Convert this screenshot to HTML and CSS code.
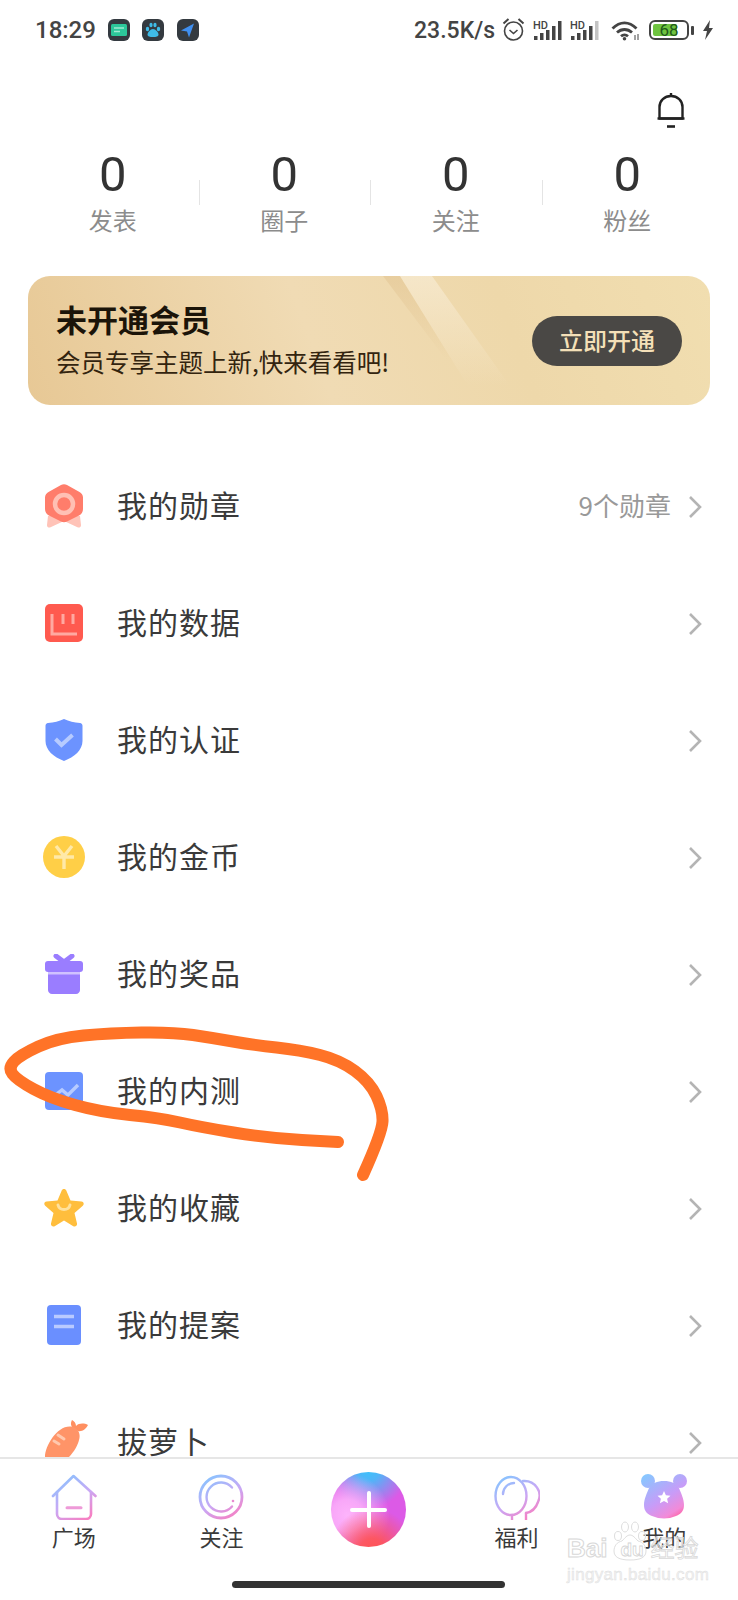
FILE: index.html
```html
<!DOCTYPE html>
<html lang="zh">
<head>
  <meta charset="UTF-8" />
  <meta name="viewport" content="width=device-width, initial-scale=1" />
  <title>我的</title>
  <link rel="stylesheet" href="styles.css">
</head>
<body>
  <div id="phone">
    <div class="status-bar">
      <span class="time">18:29</span>
      <span class="app-icon">
        <svg viewBox="0 0 22 22" width="22" height="22"><rect x="3" y="5" width="16" height="12" rx="1.500" fill="#2cc79a"/><path d="M6 9h10M6 12.500h6" stroke="#9fead2" stroke-width="1.300"/></svg>
      </span>
      <span class="app-icon">
        <svg viewBox="0 0 22 22" width="22" height="22" fill="#3fbce8"><ellipse cx="5.500" cy="10" rx="1.700" ry="2.200"/><ellipse cx="9" cy="6" rx="1.600" ry="2.300"/><ellipse cx="13" cy="6" rx="1.600" ry="2.300"/><ellipse cx="16.500" cy="10" rx="1.700" ry="2.200"/><path d="M11 10c2.500 0 5.500 3.400 5.500 5.500 0 2-2.500 2.500-5.500 2.500s-5.500-.5-5.500-2.500C5.500 13.400 8.500 10 11 10z"/></svg>
      </span>
      <span class="app-icon">
        <svg viewBox="0 0 22 22" width="22" height="22"><path d="M17 4.500L4 11.500l6 1 2 6z" fill="#3f8ff0"/></svg>
      </span>
      <div class="status-right">
        <span class="speed">23.5K/s</span>
        <svg class="alarm" width="23" height="24" viewBox="0 0 23 24" fill="none" stroke="#444" stroke-width="1.600"><circle cx="11.500" cy="14" r="9"/><path d="M7.500 13l4 3.500 4-3.500"/><path d="M1.500 6.500L6.500 2M21.500 6.500L16.500 2" stroke-width="2"/></svg>
        <svg width="29" height="21" viewBox="0 0 29 21"><text x="0" y="8.500" class="hd">HD</text><g fill="#444"><rect x="1" y="16" width="3.500" height="4"/><rect x="7" y="13" width="3.500" height="7"/><rect x="13" y="10" width="3.500" height="10"/><rect x="19" y="6" width="3.500" height="14"/><rect x="25" y="1" width="3.500" height="19"/></g></svg>
        <svg width="29" height="21" viewBox="0 0 29 21"><text x="0" y="8.500" class="hd">HD</text><g fill="#444"><rect x="1" y="16" width="3.500" height="4"/><rect x="7" y="13" width="3.500" height="7"/><rect x="13" y="10" width="3.500" height="10"/><rect x="19" y="6" width="3.500" height="14"/></g><rect x="25" y="1" width="3.500" height="19" fill="#c4c4c4"/></svg>
        <svg class="wifi" width="30" height="21" viewBox="0 0 30 21" fill="none" stroke="#444" stroke-width="2.800"><path d="M1.500 8.500C9 1 18 1 25.500 8.500"/><path d="M6 12.500c4.500-4 10.500-4 15 0"/><path d="M10 16.200c2-1.700 5-1.700 7 0"/><circle cx="13.500" cy="18.800" r="1.800" fill="#444" stroke="none"/><path d="M24 15v5M27 14v6" stroke-width="1"/></svg>
        <div class="battery"><div class="battery-body"><span class="battery-fill"></span><span class="battery-num">68</span></div><span class="battery-nub"></span></div>
        <svg width="12" height="20" viewBox="0 0 12 20"><path d="M8 0L1 11h4l-2 9 8-12H7z" fill="#444"/></svg>
      </div>
    </div>

    <div class="bell-row">
      <svg width="28" height="36" viewBox="0 0 28 36" fill="none" stroke="#222" stroke-width="2.400"><path d="M2.500 26.500V15C2.500 8.500 7.500 4 14 4s11.500 4.500 11.500 11v11.500z" stroke-linejoin="round"/><path d="M14 4V1"/><path d="M10 34.500h8" stroke-width="2.600"/><path d="M0.500 26.500h27"/></svg>
    </div>

    <div class="scroll-area">
      <div class="stats">
        <div class="stat"><div class="num">0</div><div class="label">发表</div></div>
        <div class="stat"><div class="num">0</div><div class="label">圈子</div></div>
        <div class="stat"><div class="num">0</div><div class="label">关注</div></div>
        <div class="stat"><div class="num">0</div><div class="label">粉丝</div></div>
      </div>

      <div class="vip-card">
        <div class="vip-text">
          <div class="vip-title">未开通会员</div>
          <div class="vip-sub">会员专享主题上新,快来看看吧!</div>
        </div>
        <div class="vip-btn">立即开通</div>
      </div>

      <div class="menu">
        <div class="row">
          <svg class="row-icon" width="38" height="44" viewBox="0 0 38 44"><path d="M3 32h32l1 9c.2 2-1.800 3.200-3.500 2.300L19 37 5.500 43.300C3.800 44.200 1.800 43 2 41z" fill="#ffc3b8"/><path d="M16 1c1.800-1 4.200-1 6 0l12.500 7c2 1.100 3.500 3 3.500 5.500V25c0 3-1.500 5.200-3.500 6.300L22 37.500c-1.800 1-4.200 1-6 0L3.500 31.300C1.500 30.200 0 28 0 25V13.500C0 11 1.500 9.100 3.500 8z" fill="#ff7d6b"/><circle cx="19" cy="20" r="9" fill="none" stroke="#ffc0b4" stroke-width="4.500"/></svg>
          <span class="row-name">我的勋章</span>
          <span class="row-extra">9个勋章</span>
          <svg class="chev" width="14" height="24" viewBox="0 0 14 24"><path d="M2 2l10 10L2 22" fill="none" stroke="#b4b4b4" stroke-width="2.600"/></svg>
        </div>
        <div class="row">
          <svg class="row-icon" width="38" height="38" viewBox="0 0 38 38"><rect width="38" height="38" rx="5" fill="#ff5a4f"/><path d="M7 10v20h25M18 10v10M28 10v10" fill="none" stroke="#ffa9a1" stroke-width="3"/></svg>
          <span class="row-name">我的数据</span>
          <svg class="chev" width="14" height="24" viewBox="0 0 14 24"><path d="M2 2l10 10L2 22" fill="none" stroke="#b4b4b4" stroke-width="2.600"/></svg>
        </div>
        <div class="row">
          <svg class="row-icon" width="38" height="42" viewBox="0 0 38 42"><path d="M19 0c5 2.500 10 3.500 16 4 1.500.2 2.500 1.300 2.500 2.800V22c0 9-8 16-18.500 20C8.500 38 .5 31 .5 22V6.800C.5 5.300 1.500 4.200 3 4c6-.5 11-1.500 16-4z" fill="#6c93ff"/><path d="M10.500 20l6 6 11-10" fill="none" stroke="#b7cbff" stroke-width="4"/></svg>
          <span class="row-name">我的认证</span>
          <svg class="chev" width="14" height="24" viewBox="0 0 14 24"><path d="M2 2l10 10L2 22" fill="none" stroke="#b4b4b4" stroke-width="2.600"/></svg>
        </div>
        <div class="row">
          <svg class="row-icon coin" width="42" height="42" viewBox="0 0 42 42"><circle cx="21" cy="21" r="21" fill="#ffcf47"/><path d="M13 10l8 10 8-10M21 20v13M11 21h20" fill="none" stroke="#ffe9a8" stroke-width="3.400"/></svg>
          <span class="row-name">我的金币</span>
          <svg class="chev" width="14" height="24" viewBox="0 0 14 24"><path d="M2 2l10 10L2 22" fill="none" stroke="#b4b4b4" stroke-width="2.600"/></svg>
        </div>
        <div class="row">
          <svg class="row-icon" width="38" height="40" viewBox="0 0 38 40"><path d="M11 2l8 6 8-6" fill="none" stroke="#9a7dff" stroke-width="5" stroke-linecap="round"/><rect y="7" width="38" height="11" rx="3" fill="#9a7dff"/><path d="M3 20h32v16c0 2.200-1.800 4-4 4H7c-2.200 0-4-1.800-4-4z" fill="#9a7dff"/><rect x="3" y="18" width="32" height="2.500" fill="#d0c2ff"/></svg>
          <span class="row-name">我的奖品</span>
          <svg class="chev" width="14" height="24" viewBox="0 0 14 24"><path d="M2 2l10 10L2 22" fill="none" stroke="#b4b4b4" stroke-width="2.600"/></svg>
        </div>
        <div class="row">
          <svg class="row-icon" width="38" height="38" viewBox="0 0 38 38"><rect width="38" height="38" rx="4" fill="#6c93ff"/><path d="M9 24l8-6 6 5 10-10" fill="none" stroke="#b7cbff" stroke-width="3.400"/></svg>
          <span class="row-name">我的内测</span>
          <svg class="chev" width="14" height="24" viewBox="0 0 14 24"><path d="M2 2l10 10L2 22" fill="none" stroke="#b4b4b4" stroke-width="2.600"/></svg>
        </div>
        <div class="row">
          <svg class="row-icon star" width="40" height="38" viewBox="0 0 40 38"><path d="M20 0c1 0 2 .6 2.500 2l4 9.500 11 1c2.200.2 3 2.800 1.300 4.200L30.500 24l2.500 10.500c.5 2.200-1.800 3.900-3.700 2.700L20 31.500l-9.300 5.700c-1.900 1.200-4.200-.5-3.700-2.700L9.500 24 1.200 16.700C-.5 15.300.3 12.700 2.500 12.500l11-1 4-9.500C18 .6 19 0 20 0z" fill="#ffbe3d"/><path d="M14 16c1.500 6 10.500 6 12 0" fill="none" stroke="#ffe19c" stroke-width="3" stroke-linecap="round"/></svg>
          <span class="row-name">我的收藏</span>
          <svg class="chev" width="14" height="24" viewBox="0 0 14 24"><path d="M2 2l10 10L2 22" fill="none" stroke="#b4b4b4" stroke-width="2.600"/></svg>
        </div>
        <div class="row">
          <svg class="row-icon" width="38" height="40" viewBox="0 0 38 40"><rect x="2" width="34" height="40" rx="4" fill="#6a8fff"/><path d="M9 11.500h20M9 21.500h20" stroke="#b9caff" stroke-width="3.600"/></svg>
          <span class="row-name">我的提案</span>
          <svg class="chev" width="14" height="24" viewBox="0 0 14 24"><path d="M2 2l10 10L2 22" fill="none" stroke="#b4b4b4" stroke-width="2.600"/></svg>
        </div>
        <div class="row">
          <svg class="row-icon carrot" width="46" height="46" viewBox="0 0 46 46"><path d="M28 9c-3-3-2-6-1-8 2 1 4 3 4 6 3-3 8-3 12-1-2 4-6 7-10 6z" fill="#ff8f60"/><path d="M28 8c5 2 8 6 6 13-2 9-12 23-24 25C3 47 0 44 0 38 0 26 14 4 28 8z" fill="#ff9468"/><path d="M13 16l6 4M9 22l5 3" stroke="#ffc8ae" stroke-width="3" stroke-linecap="round"/></svg>
          <span class="row-name">拔萝卜</span>
          <svg class="chev" width="14" height="24" viewBox="0 0 14 24"><path d="M2 2l10 10L2 22" fill="none" stroke="#b4b4b4" stroke-width="2.600"/></svg>
        </div>
      </div>
    </div>

    <div class="tabbar">
      <svg width="0" height="0" class="defs">
        <defs>
          <linearGradient id="tabGrad" gradientUnits="userSpaceOnUse" x1="8" y1="2" x2="34" y2="46">
            <stop offset="0" stop-color="#86c4ff"/>
            <stop offset="0.55" stop-color="#c9a8f5"/>
            <stop offset="1" stop-color="#f77fc2"/>
          </linearGradient>
          <linearGradient id="bearGrad" gradientUnits="userSpaceOnUse" x1="6" y1="0" x2="36" y2="46">
            <stop offset="0" stop-color="#86c8ff"/>
            <stop offset="0.55" stop-color="#c79cf8"/>
            <stop offset="0.85" stop-color="#f28ad8"/>
            <stop offset="1" stop-color="#ff5f9e"/>
          </linearGradient>
        </defs>
      </svg>
      <div class="tab">
        <svg width="46" height="46" viewBox="0 0 46 46" fill="none" stroke="url(#tabGrad)" stroke-width="2.600" stroke-linejoin="round" stroke-linecap="round"><path d="M2 22L22.500 2 44.500 22"/><path d="M6 18v22c0 2.800 2.200 5 5 5h24c2.800 0 5-2.200 5-5V18"/><path d="M16 33.700h14" stroke="#ee9ad8" stroke-width="3"/></svg>
        <span>广场</span>
      </div>
      <div class="tab">
        <svg width="46" height="46" viewBox="0 0 46 46" fill="none" stroke="url(#tabGrad)" stroke-width="2.800" stroke-linecap="round"><circle cx="23" cy="23" r="21"/><path d="M34 13.500A14.500 14.500 0 1 0 34 32.500" stroke-width="2.400"/><circle cx="35" cy="27" r="1.300" fill="#e88ad0" stroke="none"/></svg>
        <span>关注</span>
      </div>
      <div class="tab tab-plus">
        <div class="plus"><span class="plus-h"></span><span class="plus-v"></span></div>
      </div>
      <div class="tab">
        <svg width="46" height="46" viewBox="0 0 46 46" fill="none" stroke="url(#tabGrad)" stroke-width="2.400" stroke-linecap="round"><ellipse cx="17" cy="22" rx="15.500" ry="19"/><path d="M29 7c12-1 20 11 15 21-2 6-6 10-12 11"/><path d="M9 20c0-6 5-11 11-11"/><path d="M18 41v5M32 39v7"/></svg>
        <span>福利</span>
      </div>
      <div class="tab">
        <svg width="48" height="46" viewBox="0 0 48 46" fill="url(#bearGrad)"><circle cx="8" cy="7" r="7"/><circle cx="40" cy="7" r="7"/><path d="M24 7c7 0 12 2 15 7 2 5 5 11 5 17 0 6-3 9-8 11-4 1.700-8 2.500-12 2.500s-8-.8-12-2.500c-5-2-8-5-8-11 0-6 3-12 5-17 3-5 8-7 15-7z"/><path d="M24 17l1.900 4.200 4.600.5-3.400 3.100 1 4.500-4.100-2.300-4.100 2.300 1-4.500-3.400-3.100 4.600-.5z" fill="#fff"/></svg>
        <span>我的</span>
      </div>
    </div>

    <div class="home-bar"></div>

    <svg class="scribble" width="738" height="1600" viewBox="0 0 738 1600">
      <path d="M338 1142L302 1140Q267 1138 233.500 1132.500Q200 1127 180 1122.500Q160 1118 130 1115Q100 1112 75 1105Q50 1098 33.500 1089Q17 1080 12.500 1074Q8 1068 14 1061.500Q20 1055 38.500 1046.500Q57 1038 83.500 1035.500Q110 1033 141.500 1032.500Q173 1032 193 1035Q213 1038 233 1041.500Q253 1045 276.500 1047.500Q300 1050 320 1055Q340 1060 355 1071Q370 1082 376.500 1096Q383 1110 382.500 1121.500Q382 1133 363 1175" fill="none" stroke="#ff7327" stroke-width="12" stroke-linecap="round" stroke-linejoin="round"/>
    </svg>

    <div class="watermark">
      <div class="wm-top">
        <span class="wm-bai">Bai</span>
        <span class="wm-paw">
          <svg width="34" height="40" viewBox="0 0 34 40" fill="rgba(255,255,255,.5)" stroke="#dedede" stroke-width="1"><ellipse cx="5" cy="15" rx="3.500" ry="4.500"/><ellipse cx="12" cy="6" rx="3.500" ry="5"/><ellipse cx="22" cy="6" rx="3.500" ry="5"/><ellipse cx="29" cy="15" rx="3.500" ry="4.500"/><path d="M17 14c3 0 5 3 8 6 5 1 8 5 8 10 0 6-5 9-16 9S1 36 1 30c0-5 3-9 8-10 3-3 5-6 8-6z"/></svg>
          <span class="wm-du">du</span>
        </span>
        <span class="wm-cn">经验</span>
      </div>
      <div class="wm-url">jingyan.baidu.com</div>
    </div>
  </div>
</body>
</html>
```

FILE: styles.css
```css
html, body {
  margin: 0;
  padding: 0;
  background: #fff;
}

#phone {
  position: relative;
  width: 738px;
  height: 1600px;
  overflow: hidden;
  display: flex;
  flex-direction: column;
  font-family: "Noto Sans CJK SC", Roboto, sans-serif;
  color: #3a3a3a;
  background: #fff;
}

/* status bar */
.status-bar {
  height: 62px;
  flex: none;
  display: flex;
  align-items: center;
  padding: 0 24px 2px 35px;
  box-sizing: border-box;
  font-family: Roboto, sans-serif;
  color: #444;
}

.time {
  font-size: 24px;
  font-weight: 500;
  margin-right: 12px;
}

.app-icon {
  width: 22px;
  height: 22px;
  border-radius: 6px;
  background: #343a40;
  margin-right: 12.500px;
  display: flex;
}

.status-right {
  margin-left: auto;
  display: flex;
  align-items: center;
  gap: 8px;
}

.speed {
  font-size: 23px;
  font-weight: 500;
  margin-right: -1px;
}

.alarm {
  margin-bottom: 2px;
}

.wifi {
  margin-left: 4px;
}

.hd {
  font-family: Roboto, sans-serif;
  font-size: 11px;
  font-weight: 500;
  fill: #444;
}

.battery {
  display: flex;
  align-items: center;
  gap: 2px;
}

.battery-body {
  position: relative;
  width: 40px;
  height: 20px;
  box-sizing: border-box;
  border: 2px solid #444;
  border-radius: 6px;
  display: flex;
  align-items: center;
  justify-content: center;
}

.battery-fill {
  position: absolute;
  left: 2px;
  top: 2px;
  bottom: 2px;
  width: 24px;
  background: #6fc440;
  border-radius: 2px;
}

.battery-num {
  position: relative;
  font-size: 17px;
  color: #1f5a1a;
  line-height: 1;
}

.battery-nub {
  width: 3px;
  height: 9px;
  background: #444;
  border-radius: 1px;
}

/* bell */
.bell-row {
  height: 82px;
  flex: none;
  display: flex;
  justify-content: flex-end;
  align-items: flex-start;
  padding: 30px 53px 0 0;
  box-sizing: border-box;
}

.scroll-area {
  flex: 1;
  min-height: 0;
  overflow: hidden;
}

/* numbers row */
.stats {
  display: grid;
  grid-template-columns: repeat(4, 1fr);
  padding: 0 25px 0 27px;
}

.stat {
  position: relative;
  text-align: center;
}

.stat + .stat::before {
  content: "";
  position: absolute;
  left: 0;
  top: 36px;
  height: 25px;
  width: 1px;
  background: #e4e4e4;
}

.num {
  font-family: Roboto, sans-serif;
  font-size: 49px;
  line-height: 60px;
  padding-top: 1px;
  color: #333;
}

.label {
  font-size: 24px;
  line-height: 30px;
  color: #8c8c8c;
}

/* vip banner */
.vip-card {
  position: relative;
  overflow: hidden;
  margin: 41px 28px 0;
  height: 129px;
  border-radius: 22px;
  padding: 0 28px;
  display: flex;
  align-items: center;
  justify-content: space-between;
  background: linear-gradient(70deg, #e7c895 0%, #f0dbb4 42%, #eed8aa 70%, #f1deb0 100%);
}

.vip-card::before {
  content: "";
  position: absolute;
  inset: 0;
  background: linear-gradient(to bottom, rgba(226, 196, 146, .55), rgba(226, 196, 146, 0) 65%);
  clip-path: polygon(355px 0, 372px 0, 440px 110px, 438px 110px);
}

.vip-card::after {
  content: "";
  position: absolute;
  inset: 0;
  background: linear-gradient(to bottom, rgba(248, 236, 212, .7), rgba(248, 236, 212, 0) 85%);
  clip-path: polygon(372px 0, 404px 0, 482px 110px, 440px 110px);
}

.vip-text {
  position: relative;
  z-index: 1;
}

.vip-title {
  font-size: 31px;
  line-height: 40px;
  font-weight: 700;
  color: #1b1409;
  margin-top: -2px;
}

.vip-sub {
  font-size: 24.500px;
  line-height: 36px;
  color: #33240f;
  margin-top: 5px;
}

.vip-btn {
  position: relative;
  z-index: 1;
  width: 150px;
  height: 50px;
  line-height: 48px;
  border-radius: 25px;
  background: #4a4845;
  color: #f4e0b8;
  font-size: 24px;
  font-weight: 500;
  text-align: center;
}

/* menu list */
.menu {
  margin-top: 43px;
}

.row {
  height: 116.9px;
  display: flex;
  align-items: center;
  padding: 0 36px 0 45px;
}

.row-icon {
  flex: none;
  margin-right: 34px;
}

.row-icon.coin {
  margin-left: -2px;
  margin-right: 32px;
}

.row-icon.star {
  margin-left: -1px;
  margin-right: 33px;
}

.row-icon.carrot {
  margin-right: 26px;
}

.row-name {
  font-size: 30px;
  letter-spacing: 1px;
  color: #3a3a3a;
  margin-top: -4px;
}

.row-extra {
  margin-left: auto;
  font-size: 26px;
  color: #999;
  margin-top: -3px;
}

.chev {
  flex: none;
  margin-left: auto;
  margin-top: 2px;
}

.row-extra + .chev {
  margin-left: 17px;
}

/* bottom tabs */
.tabbar {
  flex: none;
  height: 143px;
  box-sizing: border-box;
  border-top: 2px solid #e6e6e6;
  background: #fff;
  display: grid;
  grid-template-columns: repeat(5, 1fr);
  align-items: start;
  padding-top: 15px;
}

.defs {
  position: absolute;
}

.tab {
  display: flex;
  flex-direction: column;
  align-items: center;
  gap: 1px;
  font-size: 22px;
  line-height: 30px;
  color: #3a3a3a;
}

.tab-plus {
  margin-top: -2px;
}

.plus {
  position: relative;
  width: 75px;
  height: 75px;
  border-radius: 50%;
  background:
    radial-gradient(circle at 55% 105%, #ff5454 0, rgba(255, 84, 84, .9) 14%, rgba(255, 84, 84, 0) 48%),
    radial-gradient(circle at 22% 58%, #fdb4fb 0, rgba(253, 180, 251, .85) 22%, rgba(253, 180, 251, 0) 58%),
    radial-gradient(circle at 50% -5%, #38c4fb 0, rgba(56, 196, 251, .85) 14%, rgba(56, 196, 251, 0) 46%),
    #dc5ae6;
}

.plus-h, .plus-v {
  position: absolute;
  background: #fff;
  border-radius: 2px;
}

.plus-h {
  left: 19px;
  right: 19px;
  top: 36px;
  height: 3.500px;
}

.plus-v {
  top: 19px;
  bottom: 19px;
  left: 36px;
  width: 3.500px;
}

.home-bar {
  position: absolute;
  left: 232px;
  top: 1581px;
  width: 273px;
  height: 7px;
  border-radius: 4px;
  background: #333;
}

/* hand drawn mark on the screenshot */
.scribble {
  position: absolute;
  left: 0;
  top: 0;
  pointer-events: none;
}

/* watermark */
.watermark {
  position: absolute;
  left: 567px;
  top: 1520px;
  width: 134px;
  font-family: "Liberation Sans", sans-serif;
  color: rgba(255, 255, 255, .55);
}

.wm-top {
  display: flex;
  align-items: flex-end;
  height: 41px;
}

.wm-bai {
  font-size: 26px;
  font-weight: 700;
  line-height: 26px;
  -webkit-text-stroke: 1px #d8d8d8;
}

.wm-paw {
  position: relative;
  width: 37px;
  height: 40px;
  margin-left: 6px;
  flex: none;
}

.wm-du {
  position: absolute;
  left: 7px;
  top: 18px;
  font-size: 19px;
  font-weight: 700;
  -webkit-text-stroke: .8px #d4d4d4;
}

.wm-cn {
  font-family: "Noto Sans CJK SC", sans-serif;
  font-size: 24px;
  line-height: 28px;
  -webkit-text-stroke: .8px #d8d8d8;
}

.wm-url {
  margin-top: 5px;
  font-size: 17px;
  line-height: 18px;
  letter-spacing: .3px;
  color: #f2f2f2;
  -webkit-text-stroke: .4px #dcdcdc;
}
```
